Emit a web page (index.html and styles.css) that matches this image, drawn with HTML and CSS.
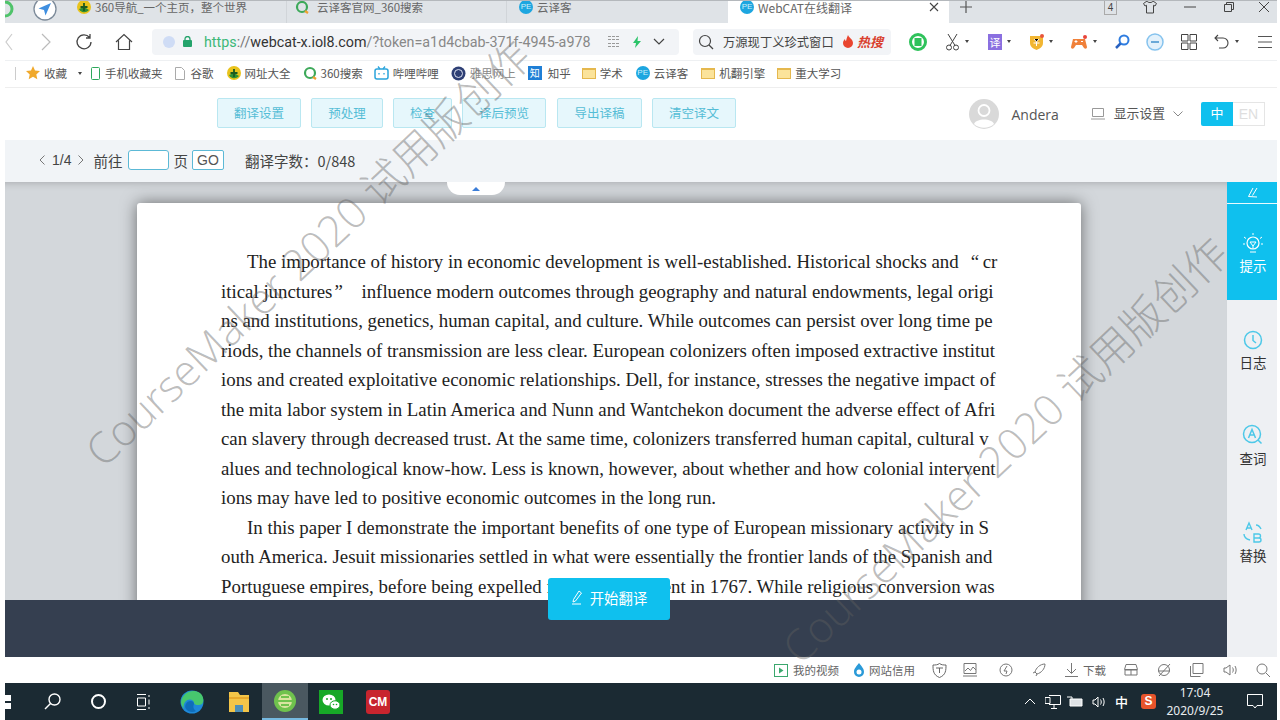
FILE: index.html
```html
<!DOCTYPE html>
<html lang="zh-CN">
<head>
<meta charset="utf-8">
<title>WebCAT在线翻译</title>
<link rel="stylesheet" href="styles.css">
</head>
<body>
<div class="screen">
  <div class="tabbar">
    <div class="tab-lead">
      <svg class="lead-green" width="10" height="18" viewBox="0 0 10 18"><circle cx="0" cy="9" r="7" fill="none" stroke="#4fc36a" stroke-width="3"/></svg>
      <svg class="lead-compass" width="24" height="24" viewBox="0 0 24 24"><circle cx="12" cy="12" r="11" fill="#fff" stroke="#7c8a99" stroke-width="1.3"/><path d="M18 6 5.5 11.5l5.5 1.5 1.5 5.5z" fill="#3f8fe0"/></svg>
    </div>
    <div class="tab tab-one">
      <svg width="14" height="14" viewBox="0 0 14 14"><circle cx="7" cy="7" r="7" fill="#e9c31c"/><path d="M2 9a6 6 0 0 0 10 1L7 7z" fill="#2f8f34"/><path d="M7 3v8M3.500 7h7" stroke="#1c5a20" stroke-width="1.800"/></svg>
      <span>360导航_一个主页，整个世界</span>
    </div>
    <div class="tab tab-two">
      <svg width="14" height="14" viewBox="0 0 14 14"><circle cx="7" cy="7" r="5" fill="none" stroke="#3da95a" stroke-width="2.200"/><path d="M10 11l3 2" stroke="#f0a030" stroke-width="2.200"/></svg>
      <span>云译客官网_360搜索</span>
    </div>
    <div class="tab tab-three">
      <span class="pe">PE</span>
      <span>云译客</span>
    </div>
    <div class="tab tab-active">
      <span class="pe">PE</span>
      <span class="tab-title">WebCAT在线翻译</span>
      <svg width="10" height="10" viewBox="0 0 10 10"><path d="M1 1l8 8M9 1l-8 8" stroke="#444" stroke-width="1.100"/></svg>
    </div>
    <svg class="tab-plus" width="14" height="14" viewBox="0 0 14 14"><path d="M7 1v12M1 7h12" stroke="#555" stroke-width="1.200"/></svg>
    <div class="win-controls">
      <span class="tab-count">4</span>
      <svg width="16" height="16" viewBox="0 0 16 16"><path d="M5 2 1.500 4.500 3 7l1.500-.7V14h7V6.300L13 7l1.500-2.500L11 2c-.5 2-5.500 2-6 0z" fill="none" stroke="#444"/></svg>
      <svg width="12" height="12" viewBox="0 0 12 12"><path d="M0 6h12" stroke="#444"/></svg>
      <svg width="12" height="12" viewBox="0 0 12 12"><path d="M1.500 3.500h7v7h-7zM3.500 3.500v-2h7v7h-2" fill="none" stroke="#444"/></svg>
      <svg width="12" height="12" viewBox="0 0 12 12"><path d="M1 1l10 10M11 1 1 11" stroke="#444"/></svg>
    </div>
  </div>

  <div class="addressbar">
    <div class="nav-icons">
      <svg width="8" height="18" viewBox="0 0 8 18"><path d="M7 1 1 9l6 8" fill="none" stroke="#ccc" stroke-width="1.200"/></svg>
      <svg width="12" height="18" viewBox="0 0 12 18"><path d="M2 1l8 8-8 8" fill="none" stroke="#bbb" stroke-width="1.200"/></svg>
      <svg width="18" height="18" viewBox="0 0 18 18"><path d="M14.500 4.500A7 7 0 1 0 16 9M15 1v4h-4" fill="none" stroke="#444" stroke-width="1.300"/></svg>
      <svg width="18" height="18" viewBox="0 0 18 18"><path d="M1 9l8-7.500L17 9M3.500 7.500V16.500h11V7.500" fill="none" stroke="#444" stroke-width="1.200"/></svg>
    </div>
    <div class="urlbox">
      <span class="url-dot"></span>
      <svg width="9" height="11" viewBox="0 0 9 11"><rect y="4" width="9" height="7" rx="1" fill="#24a36b"/><path d="M2 4V3a2.500 2.500 0 0 1 5 0v1" fill="none" stroke="#24a36b" stroke-width="1.300"/></svg>
      <div class="url-text"><span class="url-https">https</span><span class="url-sep">://</span><span class="url-host">webcat-x.iol8.com</span>/?token=a1d4cbab-371f-4945-a978</div>
      <svg class="url-qr" width="11" height="11" viewBox="0 0 11 11"><path d="M0 .5h3M4 .5h3M8 .5h3M0 3.500h3M4 3.500h3M8 3.500h3M0 7.500h3M4 7.500h3M8 7.500h3M0 10.500h3M4 10.500h3M8 10.500h3" stroke="#999"/></svg>
      <svg class="url-bolt" width="10" height="12" viewBox="0 0 10 12"><path d="M6 0 1 7h3l-1 5 6-7H5.500z" fill="#2cc46a"/></svg>
      <svg class="url-chev" width="12" height="7" viewBox="0 0 12 7"><path d="M1 1l5 5 5-5" fill="none" stroke="#444" stroke-width="1.200"/></svg>
    </div>
    <div class="searchbox">
      <svg width="16" height="16" viewBox="0 0 16 16"><circle cx="7" cy="7" r="5.500" fill="none" stroke="#444" stroke-width="1.200"/><path d="M11 11l4 4" stroke="#444" stroke-width="1.200"/></svg>
      <span class="search-text">万源现丁义珍式窗口</span>
      <svg width="12" height="13" viewBox="0 0 12 13"><path d="M6 0c1 3 5 4 5 8a5 5 0 0 1-10 0c0-2 1-3 2-4 0 1 .5 2 1 2 .5-2 1-4 2-6z" fill="#e9452f"/></svg>
      <span class="hot">热搜</span>
    </div>
    <div class="ext-icons">
      <svg class="x-green" width="18" height="18" viewBox="0 0 18 18"><circle cx="9" cy="9" r="7.500" fill="#fff" stroke="#2fc25b" stroke-width="3"/><rect x="5.500" y="5" width="7" height="8" fill="#2fc25b"/></svg>
      <span class="ext"><svg width="15" height="18" viewBox="0 0 15 18"><circle cx="4" cy="14.500" r="2.500" fill="none" stroke="#444"/><circle cx="11" cy="14.500" r="2.500" fill="none" stroke="#444"/><path d="M5 12.500 12 1M10 12.500 3 1" stroke="#444"/></svg><i class="caret"></i></span>
      <span class="ext"><span class="yi">译</span><i class="caret"></i></span>
      <span class="ext"><svg width="15" height="18" viewBox="0 0 15 18"><path d="M1 3h13v7c0 4-4 6-6.500 7C5 16 1 14 1 10z" fill="#f2b632"/><path d="M5 6l2.500 3L10 6M4.500 10h6M7.500 9v4" stroke="#fff"/><circle cx="13" cy="3" r="2" fill="#e8553b"/></svg><i class="caret"></i></span>
      <span class="ext"><svg width="18" height="16" viewBox="0 0 18 16"><path d="M3 5h12l2 8c0 2-2 2-3 1l-2-3H6l-2 3c-1 1-3 1-3-1z" fill="#f0813a"/><path d="M6 6v3M4.500 7.500h3M11 7.500h2" stroke="#fff"/><circle cx="15" cy="3" r="2" fill="#e8453b"/></svg><i class="caret"></i></span>
      <svg class="x-bluesearch" width="16" height="16" viewBox="0 0 16 16"><circle cx="10" cy="6" r="4.500" fill="none" stroke="#2f7de0" stroke-width="2"/><path d="M6.500 9.500 2 14" stroke="#2a62c0" stroke-width="2.500"/></svg>
      <svg class="x-minus" width="18" height="18" viewBox="0 0 18 18"><circle cx="9" cy="9" r="8" fill="#e3f1fb" stroke="#86c3ee" stroke-width="1.500"/><path d="M5 9h8" stroke="#6aa9d8" stroke-width="2"/></svg>
      <svg class="x-grid" width="16" height="16" viewBox="0 0 16 16"><path d="M.5.500h6.500v6.500H.5zM9 .5h6.500v6.500H9zM.5 9H7v6.500H.5zM9 9h6.500v6.500H9z" fill="none" stroke="#444"/></svg>
      <span class="ext x-undo"><svg width="16" height="15" viewBox="0 0 16 15"><path d="M4 1 1 4l3 3M1 4h8a5 5 0 0 1 0 10H5" fill="none" stroke="#444" stroke-width="1.100"/></svg><i class="caret"></i></span>
      <svg class="x-menu" width="14" height="14" viewBox="0 0 14 14"><path d="M0 1.500h14M0 7h14M0 12.500h14" stroke="#555"/></svg>
    </div>
  </div>

  <div class="bookmarks">
    <span class="bm-sep"></span>
    <span class="bm bm-star"><svg width="14" height="14" viewBox="0 0 14 14"><path d="M7 0l2 4.600 5 .5-3.700 3.300 1 4.900L7 10.800 2.700 13.300l1-4.900L0 5.100l5-.5z" fill="#f0a92c"/></svg>收藏</span>
    <i class="caret bm-caret"></i>
    <span class="bm bm-phone"><svg width="9" height="13" viewBox="0 0 9 13"><rect x=".5" y=".5" width="8" height="12" rx="1" fill="none" stroke="#2ea85c"/></svg>手机收藏夹</span>
    <span class="bm bm-doc"><svg width="10" height="13" viewBox="0 0 10 13"><path d="M.5.500h6l3 3v9H.5z" fill="none" stroke="#aaa"/></svg>谷歌</span>
    <span class="bm bm-nav"><svg width="14" height="14" viewBox="0 0 14 14"><circle cx="7" cy="7" r="7" fill="#e9c31c"/><path d="M2 9a6 6 0 0 0 10 1L7 7z" fill="#2f8f34"/><path d="M7 3v8M3.500 7h7" stroke="#1c5a20" stroke-width="1.800"/></svg>网址大全</span>
    <span class="bm bm-so"><svg width="14" height="14" viewBox="0 0 14 14"><circle cx="7" cy="7" r="5" fill="none" stroke="#3da95a" stroke-width="2.200"/><path d="M10 11l3 2" stroke="#f0a030" stroke-width="2.200"/></svg>360搜索</span>
    <span class="bm bm-bili"><svg width="15" height="14" viewBox="0 0 15 14"><rect x="1" y="3" width="13" height="10" rx="2" fill="none" stroke="#2aa4dc" stroke-width="1.500"/><path d="M4 .5l2 2.500M11 .5 9 3M5 7v1.500M10 7v1.500" stroke="#2aa4dc" stroke-width="1.300"/></svg>哔哩哔哩</span>
    <span class="bm bm-ielts"><svg width="15" height="15" viewBox="0 0 15 15"><circle cx="7.500" cy="7.500" r="7" fill="#2e3f75"/><circle cx="7.500" cy="7.500" r="4" fill="none" stroke="#dfe4f2"/></svg><em class="fade">雅思网上</em></span>
    <span class="bm bm-zhi"><span class="zhi-logo">知</span>知乎</span>
    <span class="bm bm-xue"><i class="folder"></i>学术</span>
    <span class="bm bm-yun"><span class="pe">PE</span>云译客</span>
    <span class="bm bm-ji"><i class="folder"></i>机翻引擎</span>
    <span class="bm bm-zhong"><i class="folder"></i>重大学习</span>
  </div>

  <header class="apphead">
    <nav class="toolbar">
      <button class="tool tool-a">翻译设置</button>
      <button class="tool tool-b">预处理</button>
      <button class="tool tool-c">检查</button>
      <button class="tool tool-d">译后预览</button>
      <button class="tool tool-e">导出译稿</button>
      <button class="tool tool-a">清空译文</button>
    </nav>
    <div class="account">
      <svg width="30" height="30" viewBox="0 0 30 30"><circle cx="15" cy="15" r="15" fill="#d9d9d9"/><circle cx="15" cy="11.500" r="5.500" fill="none" stroke="#fff" stroke-width="1.800"/><path d="M5 25c2-6 18-6 20 0a15 15 0 0 1-20 0z" fill="#fff"/></svg>
      <span class="user">Andera</span>
      <svg class="monitor" width="14" height="12" viewBox="0 0 14 12"><path d="M1.500.500h11v8h-11zM0 11h14" fill="none" stroke="#999"/></svg>
      <span class="display">显示设置</span>
      <svg class="display-chev" width="10" height="6" viewBox="0 0 10 6"><path d="M.5.500 5 5 9.500.5" fill="none" stroke="#888"/></svg>
      <div class="lang"><span class="lang-zh">中</span><span class="lang-en">EN</span></div>
    </div>
  </header>

  <div class="pager">
    <svg width="6" height="10" viewBox="0 0 6 10"><path d="M5.500.500 1 5l4.500 4.500" fill="none" stroke="#777"/></svg>
    <span class="page-num">1/4</span>
    <svg width="6" height="10" viewBox="0 0 6 10"><path d="M.5.500 5 5 .5 9.500" fill="none" stroke="#777"/></svg>
    <span class="goto">前往</span>
    <input class="page-input" type="text" aria-label="页码">
    <span class="page-unit">页</span>
    <button class="go">GO</button>
    <span class="count">翻译字数：0/848</span>
  </div>

  <div class="workspace">
    <div class="stage">
      <div class="docarea">
        <div class="handle"><i class="handle-tri"></i></div>
        <article class="paper">
          <p class="line lead">The importance of history in economic development is well-established. Historical shocks and<span class="q-open">“</span>cr</p>
          <p class="line">itical junctures<span class="q-close">”</span>influence modern outcomes through geography and natural endowments, legal origi</p>
          <p class="line">ns and institutions, genetics, human capital, and culture. While outcomes can persist over long time pe</p>
          <p class="line">riods, the channels of transmission are less clear. European colonizers often imposed extractive institut</p>
          <p class="line">ions and created exploitative economic relationships. Dell, for instance, stresses the negative impact of</p>
          <p class="line">the mita labor system in Latin America and Nunn and Wantchekon document the adverse effect of Afri</p>
          <p class="line">can slavery through decreased trust. At the same time, colonizers transferred human capital, cultural v</p>
          <p class="line">alues and technological know-how. Less is known, however, about whether and how colonial intervent</p>
          <p class="line">ions may have led to positive economic outcomes in the long run.</p>
          <p class="line lead">In this paper I demonstrate the important benefits of one type of European missionary activity in S</p>
          <p class="line">outh America. Jesuit missionaries settled in what were essentially the frontier lands of the Spanish and</p>
          <p class="line">Portuguese empires, before being expelled from the continent in 1767. While religious conversion was</p>
        </article>
      </div>
      <div class="dock">
        <button class="start">
          <svg width="12" height="15" viewBox="0 0 12 15"><path d="M8 1l2.500 2L4.500 11 2 12l.5-2.500zM1 14h9" fill="none" stroke="#fff"/></svg>
          开始翻译
        </button>
      </div>
    </div>
    <aside class="side">
      <div class="side-fold"><svg width="12" height="12" viewBox="0 0 12 12"><path d="M6 1 1.500 9.500 10 10M10 1 5.500 8.500" fill="none" stroke="#fff"/></svg></div>
      <div class="side-item side-on">
        <svg width="20" height="22" viewBox="0 0 20 22"><circle cx="10" cy="10" r="6" fill="none" stroke="#fff" stroke-width="1.200"/><path d="M7 9h6l-3 4zM10 13v3M7 19h6M10 0v2M1 4l2 1.500M19 4l-2 1.500M0 11h2M18 11h2" fill="none" stroke="#fff"/></svg>
        <span>提示</span>
      </div>
      <div class="side-item side-log">
        <svg width="20" height="20" viewBox="0 0 20 20"><circle cx="10" cy="10" r="8.500" fill="none" stroke="#4dc8e8" stroke-width="1.500"/><path d="M10 5v5.500l3 2.500" fill="none" stroke="#4dc8e8" stroke-width="1.500"/></svg>
        <span>日志</span>
      </div>
      <div class="side-item side-word">
        <svg width="22" height="22" viewBox="0 0 22 22"><circle cx="10" cy="10" r="8.500" fill="none" stroke="#4dc8e8" stroke-width="1.500"/><path d="M6.500 14 10 5.500l3.500 8.500M7.800 11h4.400M16 16l3.500 3.500" fill="none" stroke="#4dc8e8" stroke-width="1.500"/></svg>
        <span>查词</span>
      </div>
      <div class="side-item side-swap">
        <svg width="22" height="22" viewBox="0 0 22 22"><path d="M4 9l3-7 3 7M5 7h4M12 13h4.500a2 2 0 0 1 0 4H12zM12 17h5a2 2 0 0 1 0 4h-5zM14 4c3 0 4 2 5 4M2 13c0 3 2 5 6 6" fill="none" stroke="#4dc8e8" stroke-width="1.400"/></svg>
        <span>替换</span>
      </div>
    </aside>
  </div>

  <div class="statusbar">
    <span class="st st-video"><svg width="14" height="13" viewBox="0 0 14 13"><rect x=".5" y=".5" width="13" height="12" fill="none" stroke="#3aa76d"/><path d="M5 3.500v6l4.500-3z" fill="#3aa76d"/></svg>我的视频</span>
    <span class="st st-credit"><svg width="10" height="14" viewBox="0 0 10 14"><path d="M5 0c2 3 5 5 5 9a5 5 0 0 1-10 0c0-4 3-6 5-9z" fill="#2a9ad8"/><circle cx="5" cy="9" r="2.500" fill="#fff"/></svg>网站信用</span>
    <svg class="st-i1" width="15" height="15" viewBox="0 0 15 15"><path d="M7.500.5c2 1.500 4 1.500 6.500 1.500 0 5 0 10-6.500 12.500C1 12 1 7 1 2c2.500 0 4.500 0 6.500-1.500zM4 5h7M7.500 5v5" fill="none" stroke="#666"/></svg>
    <svg class="st-i st-i2" width="14" height="14" viewBox="0 0 14 14"><path d="M1 .5h12v10H1zM0 13h14M2 8l3-3 2.500 2.500L10 4l3 3" fill="none" stroke="#777"/></svg>
    <svg class="st-i st-i3" width="14" height="14" viewBox="0 0 14 14"><circle cx="7" cy="7" r="6" fill="none" stroke="#777"/><path d="M8 3 5 8h3l-1 3" fill="none" stroke="#777"/></svg>
    <svg class="st-i" width="14" height="14" viewBox="0 0 14 14"><path d="M13 1C8 1 4 5 3 9l2 2c4-1 8-5 8-10zM3 9l-2 1M5 11l-1 2" fill="none" stroke="#777"/></svg>
    <span class="st st-down"><svg width="13" height="14" viewBox="0 0 13 14"><path d="M6.500 0v10M2 6l4.500 4.500L11 6M0 13.500h13" fill="none" stroke="#777"/></svg>下载</span>
    <svg class="st-i st-car" width="14" height="12" viewBox="0 0 14 12"><path d="M2 .5h10l1.500 5h-13zM1 6h12v5H1zM7 6v5" fill="none" stroke="#777"/></svg>
    <svg class="st-i" width="14" height="14" viewBox="0 0 14 14"><circle cx="7" cy="7" r="5.500" fill="none" stroke="#777"/><path d="M1 8h12M13 1 2 13" fill="none" stroke="#777"/></svg>
    <svg class="st-i" width="14" height="14" viewBox="0 0 14 14"><path d="M3 .5h10v10H3zM.5 3v10.500h10" fill="none" stroke="#777"/></svg>
    <svg class="st-i" width="14" height="12" viewBox="0 0 14 12"><path d="M1 4h2l4-3v10L3 8H1zM9.500 3.500c1 1.500 1 3.500 0 5M12 2c1.500 2.500 1.500 5.500 0 8" fill="none" stroke="#777"/></svg>
    <svg class="st-i" width="14" height="14" viewBox="0 0 14 14"><circle cx="6" cy="6" r="5" fill="none" stroke="#777"/><path d="M10 10l4 4" stroke="#777"/></svg>
  </div>

  <footer class="taskbar">
    <div class="task-left">
      <span class="winstart"></span>
      <svg class="t-search" width="17" height="17" viewBox="0 0 17 17"><circle cx="10.500" cy="6.500" r="5.500" fill="none" stroke="#fff" stroke-width="1.400"/><path d="M6.500 10.500 1 16" stroke="#fff" stroke-width="1.400"/></svg>
      <span class="t-cortana"></span>
      <svg class="t-view" width="16" height="16" viewBox="0 0 16 16"><path d="M1 .5h9M1 15.500h9M1.500 4h8v8h-8zM13 1v2M13 5.500v5M13 13v2" fill="none" stroke="#fff"/></svg>
      <svg class="t-edge" width="24" height="24" viewBox="0 0 24 24"><circle cx="12" cy="12" r="11.500" fill="#1e88d8"/><path d="M1 12C2 3 12-2 20 3c4 3 4 9 2 11-3 2-8 1-8-1 0-4-6-5-9-1-2 3-2 6 0 8-2-2-4-5-4-8z" fill="#47c76e"/><path d="M6 19c-2-3 0-8 5-8 3 0 3 3 3 3-1 2-1 5 2 7-3 2-8 1-10-2z" fill="#0f6dba"/></svg>
      <svg class="t-folder" width="22" height="20" viewBox="0 0 22 20"><path d="M1 0h9l2 3h9v17H1z" fill="#f3c548"/><rect x="1" y="5" width="20" height="2" fill="#e8a92c"/><rect x="7" y="13" width="8" height="7" fill="#4d8fb8"/></svg>
      <span class="t-active"><svg width="24" height="24" viewBox="0 0 24 24"><circle cx="12" cy="12" r="11" fill="#6fc24d"/><circle cx="12" cy="12" r="7" fill="#d9e4a0"/><path d="M5 12h14M8 8h8M8 16h8" stroke="#6fc24d" stroke-width="2"/></svg></span>
      <span class="t-wechat"><svg width="24" height="24" viewBox="0 0 24 24"><rect width="24" height="24" fill="#17a827"/><ellipse cx="10" cy="10" rx="6.500" ry="5.500" fill="#fff"/><ellipse cx="16" cy="15" rx="5" ry="4.200" fill="#fff" stroke="#17a827"/><circle cx="8" cy="9" r="1" fill="#17a827"/><circle cx="12" cy="9" r="1" fill="#17a827"/><circle cx="14.500" cy="14.500" r=".8" fill="#17a827"/><circle cx="17.500" cy="14.500" r=".8" fill="#17a827"/></svg></span>
      <span class="t-cm">CM</span>
    </div>
    <div class="task-right">
      <svg width="12" height="7" viewBox="0 0 12 7"><path d="M1 6l5-5 5 5" fill="none" stroke="#fff"/></svg>
      <svg class="tray-net" width="16" height="14" viewBox="0 0 16 14"><path d="M4 .5h11.500v9H4M0 2.500h5v6H0zM6 13.500h6M9 9.500v4" fill="none" stroke="#fff"/></svg>
      <svg class="tray-bat" width="16" height="12" viewBox="0 0 16 12"><path d="M3 3h12v7H3z" fill="#dfe3e6" stroke="#fff"/><path d="M0 1h5v2" fill="none" stroke="#fff"/></svg>
      <svg class="tray-vol" width="14" height="12" viewBox="0 0 14 12"><path d="M1 4h2l3-3v10L3 8H1zM8.500 3.500c1 1.500 1 3.500 0 5M11 2c1.500 2.500 1.500 5.500 0 8" fill="none" stroke="#fff"/></svg>
      <span class="tray-ime">中</span>
      <span class="tray-sogou">S</span>
      <div class="clock"><span>17:04</span><span>2020/9/25</span></div>
      <svg class="tray-note" width="16" height="15" viewBox="0 0 16 15"><path d="M.5.500h15v11H10L8 14l-2-2.500H.5z" fill="none" stroke="#fff"/></svg>
    </div>
  </footer>
</div>
<div class="watermark wm-one">CourseMaker 2020 试用版创作</div>
<div class="watermark wm-two">CourseMaker 2020 试用版创作</div>
</body>
</html>
```

FILE: styles.css
```css
* { box-sizing: border-box; }
html, body { margin: 0; padding: 0; width: 1280px; height: 720px; overflow: hidden; background: #fff; }
body { font-family: "Noto Sans CJK SC", "Liberation Sans", sans-serif; font-size: 12px; color: #555; position: relative; }
.screen { margin-left: 5px; width: 1272px; height: 720px; display: flex; flex-direction: column; }
i, em { font-style: normal; }
svg { flex: none; display: block; }

/* tabs */
.tabbar { height: 23px; display: flex; align-items: center; background: #dfe3e7; border-top: 1px solid #b4b8bc; color: #666; font-size: 11.500px; flex: none; overflow: hidden; }
.tab-lead { width: 55px; height: 22px; display: flex; align-items: center; overflow: hidden; padding-bottom: 6px; }
.lead-compass { margin-left: 18px; }
.tab { height: 22px; display: flex; align-items: center; white-space: nowrap; flex: none; border-right: 1px solid #d1d5d9; padding-bottom: 10px; }
.tab-one { width: 227px; padding-left: 17px; gap: 4px; }
.tab-two { width: 220px; padding-left: 8px; gap: 8px; }
.tab-three { width: 221px; padding-left: 12px; gap: 4px; border-right: 0; }
.tab-active { width: 221px; padding-left: 12px; padding-right: 10px; gap: 4px; background: #fff; border-right: 0; font-size: 12px; }
.tab-title { flex: 1; }
.pe { width: 14px; height: 14px; border-radius: 50%; background: #1da6e0; color: #cfeffa; font: 8px/14px "Liberation Sans", sans-serif; text-align: center; flex: none; display: block; }
.tab-plus { margin-left: 10px; margin-bottom: 10px; }
.win-controls { display: flex; align-items: center; margin-left: 131px; margin-bottom: 10px; }
.tab-count { width: 13px; height: 15px; border: 1px solid #aaa; font: 10px/13px "Liberation Sans", sans-serif; text-align: center; color: #444; }
.win-controls svg:nth-of-type(1) { margin-left: 25px; }
.win-controls svg:nth-of-type(2) { margin-left: 26px; }
.win-controls svg:nth-of-type(3) { margin-left: 27px; }
.win-controls svg:nth-of-type(4) { margin-left: 23px; }

/* address */
.addressbar { height: 37px; display: flex; align-items: center; background: #fff; flex: none; }
.nav-icons { width: 147px; display: flex; align-items: center; }
.nav-icons svg:nth-child(2) { margin-left: 27px; }
.nav-icons svg:nth-child(3) { margin-left: 23px; }
.nav-icons svg:nth-child(4) { margin-left: 22px; }
.urlbox { width: 527px; height: 26px; background: #f2f4f7; border-radius: 4px; display: flex; align-items: center; padding-left: 11px; }
.url-dot { width: 12px; height: 12px; border-radius: 50%; background: #cfdcf5; flex: none; }
.urlbox > svg:first-of-type { margin-left: 8px; }
.url-text { width: 388px; margin-left: 12px; font: 14.300px/26px "Roboto", "Liberation Sans", sans-serif; color: #888; white-space: nowrap; overflow: hidden; }
.url-https { color: #3cb878; }
.url-sep { color: #777; }
.url-host { color: #333; }
.url-qr { margin-left: 16px; }
.url-bolt { margin-left: 13px; }
.url-chev { margin-left: 11px; }
.searchbox { width: 198px; height: 26px; margin-left: 14px; background: #f2f4f7; border-radius: 4px; display: flex; align-items: center; padding-left: 5px; color: #444; }
.search-text { margin-left: 9px; font-size: 12.300px; white-space: nowrap; width: 119px; }
.hot { margin-left: 3px; font-size: 13px; font-style: italic; font-weight: 700; color: #d9402e; white-space: nowrap; }
.ext-icons { display: flex; align-items: center; flex: 1; }
.x-green { margin-left: 18px; }
.ext { display: flex; align-items: center; gap: 5px; }
.ext:nth-child(2) { margin-left: 18px; }
.ext:nth-child(3) { margin-left: 19px; }
.ext:nth-child(4) { margin-left: 18px; }
.ext:nth-child(5) { margin-left: 17px; }
.caret { width: 0; height: 0; border: 2.500px solid transparent; border-top: 3px solid #444; border-bottom: 0; display: block; }
.yi { width: 14px; height: 16px; background: #8a6fe0; color: #fff; font-size: 11px; line-height: 16px; text-align: center; display: block; }
.x-bluesearch { margin-left: 17px; }
.x-minus { margin-left: 16px; }
.x-grid { margin-left: 17px; }
.x-undo { margin-left: 17px; }
.x-menu { margin-left: 19px; }

/* bookmarks */
.bookmarks { height: 28px; display: flex; align-items: center; background: #fff; border-bottom: 1px solid #eee; border-top: 1px solid #eef0f2; padding-bottom: 2px; font-size: 11.500px; color: #555; flex: none; white-space: nowrap; }
.bm-sep { width: 1px; height: 13px; background: #ccc; margin-left: 10px; }
.bm { display: flex; align-items: center; gap: 4px; }
.bm-star { margin-left: 10px; }
.bm-caret { margin-left: 11px; }
.bm-phone { margin-left: 9px; gap: 5px; }
.bm-doc { margin-left: 12px; gap: 6px; }
.bm-nav { margin-left: 13px; }
.bm-so { margin-left: 12px; }
.bm-bili { margin-left: 11px; }
.bm-ielts { margin-left: 12px; }
.bm-zhi { margin-left: 12px; gap: 6px; }
.bm-xue { margin-left: 11px; }
.bm-yun { margin-left: 13px; }
.bm-ji { margin-left: 13px; }
.bm-zhong { margin-left: 12px; }
.fade { color: #888; }
.zhi-logo { width: 14px; height: 14px; background: #1f7fd6; color: #fff; font-size: 10px; line-height: 14px; text-align: center; display: block; }
.folder { width: 14px; height: 11px; background: #fbe39a; border: 1px solid #e5b84e; border-top-width: 2px; display: block; }

/* header */
.apphead { height: 52px; display: flex; align-items: center; justify-content: space-between; background: #fff; padding: 0 12px 2px 212px; flex: none; }
.toolbar { display: flex; align-items: center; }
.tool { height: 30px; padding: 0 0 2px; background: #e6f7fc; border: 1px solid #b9e7f1; border-radius: 2px; color: #55bdd6; font-family: inherit; font-size: 12.500px; margin-right: 10px; }
.tool-a { width: 84px; }
.tool-b { width: 72px; }
.tool-c { width: 59px; margin-right: 10px; }
.tool-d { width: 84px; margin-right: 11px; }
.tool-e { width: 85px; }
.account { display: flex; align-items: center; margin-top: 2px; }
.user { margin-left: 12px; font: 14px "Open Sans", "Liberation Sans", sans-serif; color: #555; }
.monitor { margin-left: 32px; }
.display { margin-left: 9px; margin-top: -3px; font-size: 12.800px; color: #555; }
.display-chev { margin-left: 8px; }
.lang { margin-left: 18px; display: flex; height: 24px; width: 64px; }
.lang-zh { width: 32px; background: #0fc0ee; color: #fff; text-align: center; line-height: 22px; font-size: 13px; border-radius: 2px 0 0 2px; }
.lang-en { width: 32px; border: 1px solid #e5e5e5; border-left: 0; color: #dedede; text-align: center; font: 14px/22px "Liberation Sans", sans-serif; }

/* pager */
.pager { height: 42px; display: flex; align-items: center; background: #f1f4f7; padding: 0 0 2px 34px; color: #444; font-size: 14.500px; flex: none; }
.page-num { margin: 0 7px; font: 14px "Liberation Sans", sans-serif; color: #444; }
.goto { margin-left: 9px; }
.page-input { width: 41px; height: 20px; margin-left: 6px; border: 1px solid #5cb9d6; border-radius: 3px; background: #fff; padding: 0; }
.page-unit { margin-left: 4px; }
.go { width: 32px; height: 20px; margin-left: 4px; padding: 0; border: 1px solid #5cb9d6; border-radius: 2px; background: #fff; color: #555; font: 14px "Liberation Sans", sans-serif; }
.count { margin-left: 21px; }

/* workspace */
.workspace { height: 475px; display: flex; flex: none; }
.stage { width: 1222px; display: flex; flex-direction: column; }
.docarea { height: 418px; background: #d3d7db; padding: 21px 0 0 132px; overflow: hidden; position: relative; flex: none; box-shadow: inset 0 8px 8px -8px rgba(0,0,0,.25); }
.handle { position: absolute; left: 442px; top: 0; width: 58px; height: 13px; background: #fff; border-radius: 0 0 14px 14px; display: flex; justify-content: center; padding-top: 5px; }
.handle-tri { width: 0; height: 0; border: 4px solid transparent; border-bottom: 4px solid #3b7dd8; border-top: 0; display: block; }
.paper { width: 944px; min-height: 500px; padding: 44px 0 0 84px; background: #fff; border-radius: 3px; box-shadow: 0 0 16px rgba(0,0,0,.5); font-family: "Liberation Serif", "Noto Sans CJK SC", serif; font-size: 18.850px; color: #222; }
.line { margin: 0; height: 29.500px; line-height: 29.500px; white-space: nowrap; }
.lead { padding-left: 26px; }
.q-open { display: inline-block; width: 24px; text-align: left; padding-left: 12px; }
.q-close { display: inline-block; width: 29px; text-align: left; padding-left: 2px; }
.dock { height: 57px; background: #353f50; position: relative; flex: none; }
.start { position: absolute; left: 543px; top: -22px; width: 122px; height: 42px; display: flex; align-items: center; justify-content: center; gap: 7px; background: #0fc0ee; border: 0; border-radius: 3px; color: #fff; font-family: inherit; font-size: 14.400px; padding: 0 0 3px; }

/* side */
.side { width: 50px; background: #eef0f3; flex: none; }
.side-fold { height: 22px; background: #0fc0ee; border-bottom: 1px solid #e8fbff; display: flex; align-items: center; justify-content: center; padding-left: 2px; }
.side-item { display: flex; flex-direction: column; align-items: center; color: #333; font-size: 13.500px; line-height: 18px; gap: 3px; padding-left: 2px; }
.side-on { height: 96px; background: #0fc0ee; color: #fff; padding-top: 29px; gap: 1px; }
.side-log { padding-top: 30px; }
.side-word { padding-top: 53px; }
.side-swap { padding-top: 54px; }

/* status */
.statusbar { height: 26px; display: flex; align-items: center; background: #fff; padding-left: 769px; font-size: 11.500px; color: #666; flex: none; white-space: nowrap; }
.st { display: flex; align-items: center; gap: 5px; }
.st-credit { margin-left: 15px; }
.st-i1 { margin-left: 17px; }
.st-i { margin-left: 19px; }
.st-i2 { margin-left: 16px; }
.st-i3 { margin-left: 22px; }
.st-down { margin-left: 19px; gap: 5px; }
.st-car { margin-left: 18px; }

/* taskbar */
.taskbar { height: 37px; display: flex; align-items: center; justify-content: space-between; background: #1b2a33; color: #fff; flex: 1; }
.task-left { display: flex; align-items: center; height: 100%; }
.winstart { width: 6px; height: 14px; background: linear-gradient(#fff 45%, #1b2a33 45%, #1b2a33 55%, #fff 55%); }
.t-search { margin-left: 33px; }
.t-cortana { width: 15px; height: 15px; border: 2px solid #fff; border-radius: 50%; margin-left: 30px; }
.t-view { margin-left: 30px; }
.t-edge { margin-left: 28px; }
.t-folder { margin-left: 24px; }
.t-active { width: 46px; height: 100%; margin-left: 12px; background: #4a5860; border-bottom: 2px solid #76b9e0; display: flex; align-items: center; justify-content: center; }
.t-wechat { margin-left: 11px; }
.t-cm { width: 24px; height: 24px; margin-left: 23px; border-radius: 3px; background: #c8252e; color: #fff; font: 900 12px/24px "Liberation Sans", sans-serif; text-align: center; }
.task-right { display: flex; align-items: center; height: 100%; padding-right: 14px; }
.tray-net { margin-left: 9px; }
.tray-bat { margin-left: 6px; }
.tray-vol { margin-left: 9px; }
.tray-ime { margin-left: 9px; font-size: 13px; font-weight: 500; }
.tray-sogou { width: 15px; height: 15px; margin-left: 13px; border-radius: 3px; background: #e8542b; color: #fff; font: 700 12px/15px "Liberation Sans", sans-serif; text-align: center; }
.clock { width: 68px; margin-left: 5px; display: flex; flex-direction: column; align-items: center; font: 12px/18px "Noto Sans", sans-serif; color: #e8ecef; }
.tray-note { margin-left: 18px; }

/* watermark */
.watermark { position: absolute; width: 640px; height: 60px; line-height: 60px; text-align: center; font-family: "Open Sans", "Noto Sans CJK SC", sans-serif; font-weight: 300; font-size: 43px; color: rgba(95,95,95,.42); transform: rotate(-43.500deg); white-space: nowrap; pointer-events: none; }
.wm-one { left: -12px; top: 223px; }
.wm-two { left: 685px; top: 420px; }
```
